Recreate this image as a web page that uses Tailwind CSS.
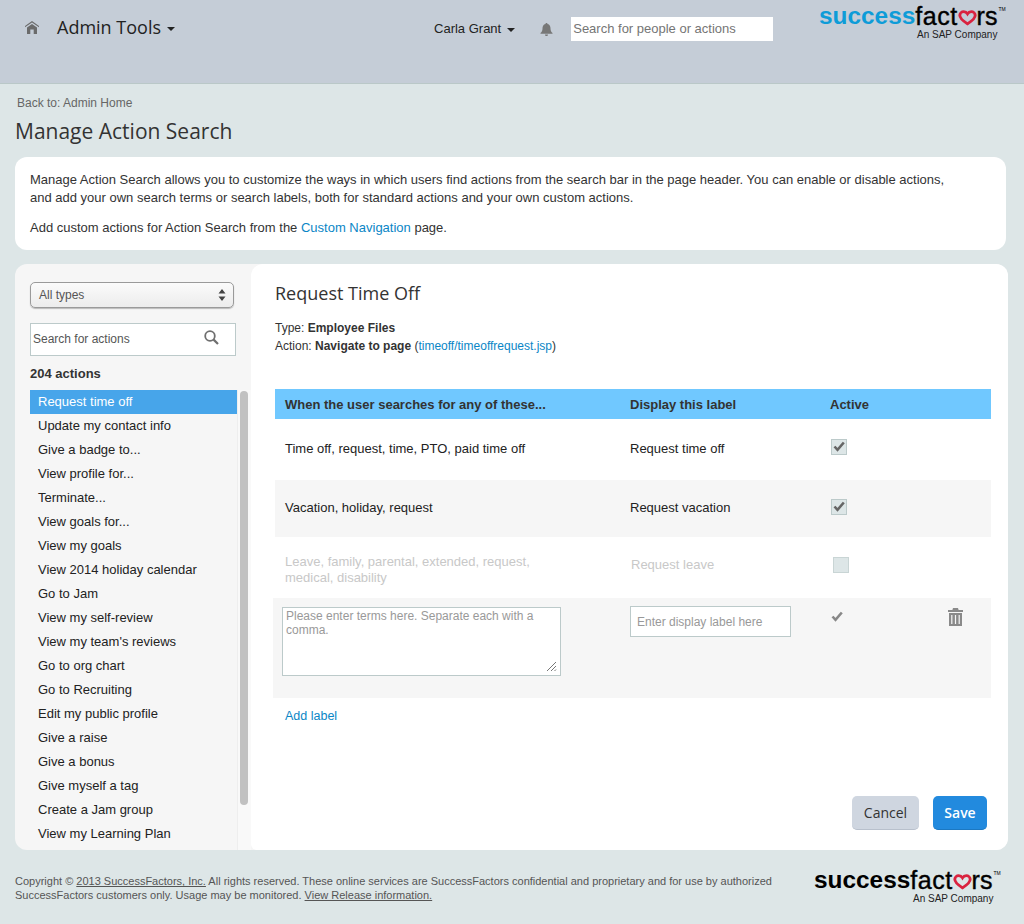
<!DOCTYPE html>
<html lang="en">

<head>
    <meta charset="UTF-8">
    <meta name="viewport" content="width=device-width, initial-scale=1.0">
    <title>Manage Action Search</title>
    <script src="https://cdn.jsdelivr.net/npm/@tailwindcss/browser@4"></script>
</head>

<body class="bg-[#dde6e7] font-['Liberation_Sans',sans-serif] text-[13px] text-[#333] w-[1024px] h-[924px] overflow-hidden">

    <!-- Header -->
    <header class="h-[84px] bg-[#c5cdd7] border-b border-[#bac8c8] flex items-start relative">
        <svg class="ml-[25px] mt-[21px] w-[14px] h-[13px]" viewBox="0 0 14 13" fill="#6b6b6b">
            <path d="M7 0 L14 5 L14 6.2 L7 1.6 L0 6.2 L0 5 Z M7 3 L12 6.4 L12 13 L8.7 13 L8.7 8.5 L5.3 8.5 L5.3 13 L2 13 L2 6.4 Z"/>
        </svg>
        <div class="ml-[18px] mt-[15px] font-['Open_Sans',sans-serif] text-[18px] leading-[25px] text-[#222] flex items-center">
            Admin Tools
            <span class="ml-[6px] mt-[2px] border-x-[4.5px] border-x-transparent border-t-[4px] border-t-[#222]"></span>
        </div>
        <div class="ml-[259px] mt-[20px] text-[13px] leading-[17px] text-[#222] flex items-center">
            Carla Grant
            <span class="ml-[6px] mt-[2px] border-x-[4.5px] border-x-transparent border-t-[4px] border-t-[#222]"></span>
        </div>
        <svg class="ml-[25px] mt-[23px] w-[13px] h-[13px]" viewBox="0 0 13 13" fill="#777">
            <path d="M6.5 0 C7.2 0 7.5 .4 7.5 1 C9.8 1.5 10.5 3.4 10.5 5.5 C10.5 8 11.3 9 12.5 10 L12.5 10.8 L.5 10.8 L.5 10 C1.7 9 2.5 8 2.5 5.5 C2.5 3.4 3.2 1.5 5.5 1 C5.5 .4 5.8 0 6.5 0 Z M5 11.5 L8 11.5 C8 12.5 7.3 13 6.5 13 C5.7 13 5 12.5 5 11.5 Z"/>
        </svg>
        <input class="ml-[18px] mt-[17px] w-[202px] h-[24px] bg-white px-[2px] pb-[2px] text-[13px] placeholder:text-[#757575] outline-none"
            placeholder="Search for people or actions">
        <div class="absolute left-[819px] top-[2px] w-[195px]">
            <div class="flex items-start text-[25px] leading-[28px] text-black">
                <span class="font-bold text-[24.4px] text-[#0e9cd8]">success</span><span class="tracking-[0.5px] [-webkit-text-stroke:0.4px_#000]">fact</span><svg class="w-[19px] h-[16px] mt-[8px]" viewBox="0 0 16 15" fill="none" stroke="#d9233f" stroke-width="2.4" preserveAspectRatio="none"><path d="M8 13 C3 9.5 1.5 7.5 1.5 5 C1.5 2.8 3.2 1.5 4.8 1.5 C6.2 1.5 7.3 2.3 8 3.6 C8.7 2.3 9.8 1.5 11.2 1.5 C12.8 1.5 14.5 2.8 14.5 5 C14.5 7.5 13 9.5 8 13 Z"/></svg><span class="[-webkit-text-stroke:0.4px_#000]">rs</span><span class="text-[5px] leading-[14px] ml-[1px]">TM</span>
            </div>
            <div class="ml-[98px] -mt-[1px] text-[10px] leading-[12px] text-[#222]">An SAP Company</div>
        </div>
    </header>

    <main class="pl-[15px] pr-[16px]">
        <div class="pl-[2px] pt-[12px] text-[12px] leading-[15px] text-[#666]">Back to: Admin Home</div>
        <h1 class="mt-[5px] font-['Open_Sans',sans-serif] text-[21px] leading-[30px] text-[#333]">Manage Action Search</h1>

        <!-- Intro card -->
        <section class="mt-[11px] mr-[2px] h-[93px] bg-white rounded-xl pl-[15px] pr-[50px] pt-[14px] text-[13px] leading-[18px]">
            <p>Manage Action Search allows you to customize the ways in which users find actions from the search bar in the page header. You can enable or disable actions, and add your own search terms or search labels, both for standard actions and your own custom actions.</p>
            <p class="mt-[12px]">Add custom actions for Action Search from the <a class="text-[#0a86c6]">Custom Navigation</a> page.</p>
        </section>

        <!-- Main panel -->
        <section class="mt-[14px] h-[586px] flex rounded-xl overflow-hidden bg-[#f6f6f6]">
            <aside class="w-[222px] shrink-0 flex flex-col pl-[15px]">
                <div class="mt-[18px] w-[204px] h-[26px] rounded-[5px] border border-[#9a9a9a] bg-gradient-to-b from-[#fbfbfb] to-[#ececec] flex items-center justify-between pl-[8px] pr-[7px] text-[12px] text-[#555] shadow-[0_1px_1px_#bbb]">
                    All types
                    <svg class="w-[8px] h-[12px]" viewBox="0 0 8 12" fill="#444"><path d="M4 0 L7.5 4.5 L.5 4.5 Z M4 12 L7.5 7.5 L.5 7.5 Z"/></svg>
                </div>
                <div class="mt-[15px] w-[206px] h-[33px] border border-[#bccaca] bg-white flex items-center justify-between pl-[2px] pr-[16px] pb-[2px] text-[12px] text-[#555]">
                    Search for actions
                    <svg class="w-[15px] h-[15px] -mt-[2px]" viewBox="0 0 15 15" fill="none" stroke="#6f6f6f" stroke-width="1.8"><circle cx="6" cy="6" r="4.8"/><path d="M9.6 9.6 L14 14" stroke-width="2.2"/></svg>
                </div>
                <div class="mt-[10px] text-[13px] leading-[16px] font-bold text-[#333]">204 actions</div>
                <ul class="mt-[8px] w-[207px] text-[13px] leading-[23px] text-[#222]">
                    <li class="pl-[8px] h-[24px] bg-[#47a5ea] text-white">Request time off</li>
                    <li class="pl-[8px] h-[24px]">Update my contact info</li>
                    <li class="pl-[8px] h-[24px]">Give a badge to...</li>
                    <li class="pl-[8px] h-[24px]">View profile for...</li>
                    <li class="pl-[8px] h-[24px]">Terminate...</li>
                    <li class="pl-[8px] h-[24px]">View goals for...</li>
                    <li class="pl-[8px] h-[24px]">View my goals</li>
                    <li class="pl-[8px] h-[24px]">View 2014 holiday calendar</li>
                    <li class="pl-[8px] h-[24px]">Go to Jam</li>
                    <li class="pl-[8px] h-[24px]">View my self-review</li>
                    <li class="pl-[8px] h-[24px]">View my team's reviews</li>
                    <li class="pl-[8px] h-[24px]">Go to org chart</li>
                    <li class="pl-[8px] h-[24px]">Go to Recruiting</li>
                    <li class="pl-[8px] h-[24px]">Edit my public profile</li>
                    <li class="pl-[8px] h-[24px]">Give a raise</li>
                    <li class="pl-[8px] h-[24px]">Give a bonus</li>
                    <li class="pl-[8px] h-[24px]">Give myself a tag</li>
                    <li class="pl-[8px] h-[24px]">Create a Jam group</li>
                    <li class="pl-[8px] h-[24px]">View my Learning Plan</li>
                </ul>
            </aside>

            <!-- Scrollbar -->
            <div class="w-[14px] shrink-0 mt-[126px] bg-[#f9f9f9] border-l border-[#eeeeee] pl-[2px] pt-[1px]">
                <div class="w-[8px] h-[414px] rounded-full bg-[#c1c1c1]"></div>
            </div>

            <!-- Detail -->
            <div class="flex-1 bg-white rounded-tl-xl rounded-bl-md pl-[22px] pr-[17px] flex flex-col">
                <h2 class="ml-[2px] mt-[16px] font-['Open_Sans',sans-serif] text-[18px] leading-[26px] text-[#333]">Request Time Off</h2>
                <p class="ml-[2px] mt-[13px] text-[12px] leading-[18px] text-[#333]">Type: <b>Employee Files</b><br>Action: <b>Navigate to page</b> (<a class="text-[#0a86c6]">timeoff/timeoffrequest.jsp</a>)</p>

                <div class="mt-[34px] ml-[2px] h-[30px] bg-[#70c8ff] grid grid-cols-[355px_200px_1fr] items-center font-bold text-[13px] text-[#333]">
                    <div class="pl-[10px] pt-[1px]">When the user searches for any of these...</div>
                    <div class="pt-[2px]">Display this label</div>
                    <div class="pt-[1px]">Active</div>
                </div>
                <div class="h-[61px] ml-[2px] pb-[2px] grid grid-cols-[355px_200px_1fr] items-center text-[13px] text-[#222]">
                    <div class="pl-[10px]">Time off, request, time, PTO, paid time off</div>
                    <div>Request time off</div>
                    <div class="pl-[1px] -mt-[4px]">
                        <div class="w-[16px] h-[16px] bg-[#dde6e7] border border-[#bccaca] flex items-center justify-center">
                            <svg class="w-[12px] h-[11px]" viewBox="0 0 12 11" fill="none" stroke="#666" stroke-width="2.6"><path d="M1.5 5.5 L4.5 8.8 L10.8 1.5"/></svg>
                        </div>
                    </div>
                </div>
                <div class="h-[57px] ml-[2px] pb-[2px] bg-[#f6f6f6] grid grid-cols-[355px_200px_1fr] items-center text-[13px] text-[#222]">
                    <div class="pl-[10px]">Vacation, holiday, request</div>
                    <div>Request vacation</div>
                    <div class="pl-[1px] -mt-[2px]">
                        <div class="w-[16px] h-[16px] bg-[#dde6e7] border border-[#bccaca] flex items-center justify-center">
                            <svg class="w-[12px] h-[11px]" viewBox="0 0 12 11" fill="none" stroke="#666" stroke-width="2.6"><path d="M1.5 5.5 L4.5 8.8 L10.8 1.5"/></svg>
                        </div>
                    </div>
                </div>
                <div class="h-[61px] ml-[2px] grid grid-cols-[355px_200px_1fr] items-center text-[13px] leading-[16px] text-[#c8c8c8]">
                    <div class="pl-[10px] w-[270px] mt-[4px]">Leave, family, parental, extended, request, medical, disability</div>
                    <div class="pl-[1px] -mt-[5px]">Request leave</div>
                    <div class="pl-[3px] -mt-[5px]">
                        <div class="w-[16px] h-[16px] bg-[#dde6e7] border border-[#c9d5d5]"></div>
                    </div>
                </div>
                <div class="h-[100px] bg-[#f6f6f6] flex items-start relative">
                    <div class="relative ml-[9px] mt-[9px] w-[279px] h-[69px] border border-[#bccaca] bg-white pl-[3px] pt-[1px] text-[12px] leading-[14px] text-[#999]">
                        Please enter terms here. Separate each with a comma.
                        <svg class="absolute right-[3px] bottom-[3px] w-[11px] h-[11px]" viewBox="0 0 11 11" stroke="#777" stroke-width="1" fill="none"><path d="M1 10 L10 1 M5 10 L10 5 M8.5 10 L10 8.5"/></svg>
                    </div>
                    <div class="ml-[69px] mt-[8px] w-[161px] h-[31px] border border-[#bccaca] bg-white flex items-center pl-[6px] text-[12px] text-[#999]">Enter display label here</div>
                    <svg class="ml-[40px] mt-[13px] w-[12px] h-[11px]" viewBox="0 0 12 11" fill="none" stroke="#888" stroke-width="2.6"><path d="M1.5 5.5 L4.5 8.8 L10.8 1.5"/></svg>
                    <svg class="ml-[105px] mt-[10px] w-[15px] h-[18px]" viewBox="0 0 15 18" fill="#8a8a8a">
                        <path d="M5 0 H10 L10.6 2 H15 V4 H0 V2 H4.4 Z M1 5 H14 V18 H1 Z"/>
                        <path d="M3.8 7 V16 M7.5 7 V16 M11.2 7 V16" stroke="#f6f6f6" stroke-width="1.2"/>
                    </svg>
                </div>
                <a class="ml-[12px] mt-[10px] text-[12.5px] leading-[16px] text-[#0a86c6]">Add label</a>
                <div class="mt-[72px] flex justify-end gap-[14px] pr-[4px] font-['Open_Sans',sans-serif] text-[14px]">
                    <button class="w-[67px] h-[34px] rounded-[5px] bg-[#cfd6e0] border-b border-[#b8c0cc] text-[#333]">Cancel</button>
                    <button class="w-[54px] h-[34px] rounded-[5px] bg-[#228ade] border-b border-[#1c78c2] text-white font-semibold">Save</button>
                </div>
            </div>
        </section>
    </main>

    <!-- Footer -->
    <footer class="relative pl-[15px] pt-[24px] text-[11px] leading-[14px] text-[#555] w-[790px]">
        <p>Copyright © <u>2013 SuccessFactors, Inc.</u> All rights reserved. These online services are SuccessFactors confidential and proprietary and for use by authorized SuccessFactors customers only. Usage may be monitored. <u>View Release information.</u></p>
        <div class="absolute left-[814px] top-[16px] w-[195px]">
            <div class="flex items-start text-[25px] leading-[28px] text-black">
                <span class="font-bold text-[24.4px]">success</span><span class="tracking-[0.5px] [-webkit-text-stroke:0.4px_#000]">fact</span><svg class="w-[19px] h-[16px] mt-[8px]" viewBox="0 0 16 15" fill="none" stroke="#d9233f" stroke-width="2.4" preserveAspectRatio="none"><path d="M8 13 C3 9.5 1.5 7.5 1.5 5 C1.5 2.8 3.2 1.5 4.8 1.5 C6.2 1.5 7.3 2.3 8 3.6 C8.7 2.3 9.8 1.5 11.2 1.5 C12.8 1.5 14.5 2.8 14.5 5 C14.5 7.5 13 9.5 8 13 Z"/></svg><span class="[-webkit-text-stroke:0.4px_#000]">rs</span><span class="text-[5px] leading-[14px] ml-[1px]">TM</span>
            </div>
            <div class="ml-[99px] -mt-[1px] text-[10px] leading-[12px] text-[#222]">An SAP Company</div>
        </div>
    </footer>

</body>

</html>
